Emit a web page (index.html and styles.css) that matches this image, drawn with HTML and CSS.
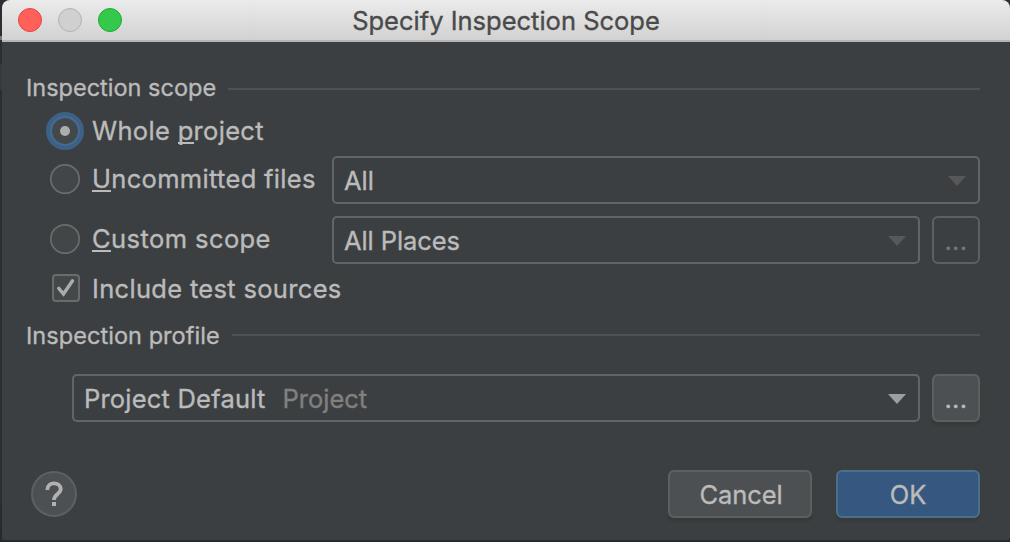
FILE: index.html
```html
<!DOCTYPE html>
<html lang="en">
<head>
<meta charset="utf-8">
<title>Specify Inspection Scope</title>
<link rel="stylesheet" href="styles.css">
</head>
<body>
<main class="dialog">
  <header class="titlebar">
    <div class="lights"><i class="light close"></i><i class="light minimize"></i><i class="light maximize"></i></div>
    <h1 class="title">Specify Inspection Scope</h1>
  </header>
  <div class="content">
    <div class="section"><h2>Inspection scope</h2><span class="rule"></span></div>
    <div class="row row-whole">
      <svg class="radio" viewBox="0 0 38 38"><circle cx="19" cy="19" r="16" fill="#43494a" stroke="#3d6185" stroke-width="6"/><circle cx="19" cy="19" r="14" fill="none" stroke="#436b94" stroke-width="2"/><circle cx="19" cy="19" r="5" fill="#adadad"/></svg>
      <span class="label">Whole <u>p</u>roject</span>
    </div>
    <div class="row row-field">
      <svg class="radio" viewBox="0 0 38 38"><circle cx="19" cy="19" r="14.2" fill="#414749" stroke="#6b6b6b" stroke-width="1.7"/></svg>
      <span class="label"><u>U</u>ncommitted files</span>
      <div class="combo"><span>All</span><svg class="arrow" viewBox="0 0 18 10"><path d="M0 0H18L9 10Z"/></svg></div>
    </div>
    <div class="row row-field row-custom">
      <svg class="radio" viewBox="0 0 38 38"><circle cx="19" cy="19" r="14.2" fill="#414749" stroke="#6b6b6b" stroke-width="1.7"/></svg>
      <span class="label"><u>C</u>ustom scope</span>
      <div class="combo"><span class="places">All Places</span><svg class="arrow" viewBox="0 0 18 10"><path d="M0 0H18L9 10Z"/></svg></div>
      <button class="more disabled">...</button>
    </div>
    <div class="row row-check">
      <svg class="check" viewBox="0 0 28 28"><rect x="1" y="1" width="26" height="26" rx="3" fill="#43494a" stroke="#6b6b6b" stroke-width="2"/><path d="M6.8 14.3L11.5 20L20.5 6.8" fill="none" stroke="#acacac" stroke-width="3.4" stroke-linecap="round"/></svg>
      <span class="label">Include test sources</span>
    </div>
    <div class="section section-profile"><h2>Inspection profile</h2><span class="rule"></span></div>
    <div class="row row-profile">
      <div class="combo active"><span class="profile">Project Default</span><span class="kind">Project</span><svg class="arrow" viewBox="0 0 18 10"><path d="M0 0H18L9 10Z"/></svg></div>
      <button class="more">...</button>
    </div>
    <footer class="footer">
      <svg class="help" viewBox="0 0 46 46"><circle cx="23" cy="23" r="22" fill="#4c5052" stroke="#5e6060" stroke-width="2"/><path d="M16.3 19C16.3 10 29.7 10.5 29.7 18C29.7 23 23 23 23 29" fill="none" stroke="#afb1b3" stroke-width="3.8"/><path d="M21 31h4v4h-4z" fill="#afb1b3"/></svg>
      <button class="btn cancel">Cancel</button>
      <button class="btn primary">OK</button>
    </footer>
  </div>
</main>
</body>
</html>
```
FILE: styles.css
```css
* { box-sizing: border-box; }
body {
  margin: 0;
  height: 542px;
  padding-left: 2px;
  overflow: hidden;
  background: linear-gradient(#2c2e33 0 36px, #77797b 36px 40px, #2b2d30 40px 64px, #343a40 64px 90px, #2b2d2f 90px 500px, #222a35 542px);
  font-family: Inter, "Liberation Sans", sans-serif;
  font-size: 25.5px;
  color: #bbbbbb;
  -webkit-text-stroke: 0.35px currentColor;
}
.dialog {
  width: 1008px;
  height: 540px;
  overflow: hidden;
  border-radius: 8px 8px 2px 2px;
  background: #3c3f41;
}
.titlebar {
  display: grid;
  grid-template-columns: 122px 1fr 122px;
  align-items: center;
  height: 42px;
  border-bottom: 2px solid #b5b5b5;
  background: linear-gradient(#ebebeb, #d2d2d2);
}
.lights { display: flex; gap: 16px; padding-left: 16px; }
.light { width: 24px; height: 24px; border-radius: 50%; border: 1px solid; }
.close { background: #ff605a; border-color: #e44642; }
.minimize { background: #d0d0d0; border-color: #b2b2b2; }
.maximize { background: #34c94a; border-color: #20a936; }
.title {
  margin: 0;
  padding-top: 2px;
  font-size: 25.5px;
  font-weight: 400;
  line-height: 38px;
  text-align: center;
  color: #4a4a4a;
}
.content { padding: 32px 30px 0 24px; }
.section { display: flex; align-items: center; gap: 12px; height: 28px; }
.section h2 { margin: 0; font-size: 23.5px; font-weight: 400; line-height: 28px; white-space: nowrap; }
.rule { flex: 1; height: 2px; margin-top: 2px; background: #515151; }
.row { display: flex; align-items: center; white-space: nowrap; }
.row-whole { height: 38px; margin-top: 10px; padding-left: 20px; }
.radio { flex: none; width: 38px; height: 38px; }
.label { margin-left: 8px; line-height: 32px; letter-spacing: 0.32px; }
.label u {
  text-decoration: none;
  background: linear-gradient(#bbb, #bbb) 0 calc(100% - 2px) / 100% 2px no-repeat;
}
.row-field { height: 48px; padding-left: 20px; margin-top: 6px; }
.row-field .radio { margin-top: -2px; }
.row-field .label { width: 240px; margin-top: -2px; }
.row-custom { margin-top: 12px; }
.row-custom .label { letter-spacing: 0.42px; }
.combo {
  display: flex;
  align-items: center;
  flex: 1;
  height: 48px;
  padding: 0 12px 0 10px;
  border: 2px solid #646464;
  border-radius: 5px;
}
.places { letter-spacing: -0.1px; }
.profile { letter-spacing: 0.2px; }
.arrow { width: 18px; height: 10px; margin-left: auto; margin-top: 2px; fill: #585858; }
.active .arrow { fill: #9c9ea0; }
.kind { margin-left: 17px; color: #808080; }
.more, .btn {
  height: 48px;
  padding: 0;
  border: 2px solid #5e6060;
  border-radius: 6px;
  background: #4c5052;
  box-shadow: 0 4px 1px #373a3b;
  color: #bbb;
  font: inherit;
  letter-spacing: -0.1px;
}
.more { width: 48px; margin-left: 12px; letter-spacing: 0.4px; }
.more.disabled { background: transparent; color: #777; box-shadow: none; }
.row-check { height: 28px; margin-top: 10px; padding-left: 26px; }
.check { width: 28px; height: 28px; flex: none; }
.row-check .label { margin-left: 12px; padding-top: 2px; }
.section-profile { margin-top: 20px; }
.section-profile h2 { letter-spacing: 0.05px; }
.section-profile .rule { margin-top: -2px; }
.row-profile { margin-top: 24px; padding-left: 46px; }
.footer { display: flex; align-items: center; margin-top: 48px; padding-left: 5px; gap: 24px; }
.help { width: 46px; height: 46px; margin-right: auto; }
.btn { width: 144px; }
.cancel { padding-left: 2px; }
.primary { background: #365880; border-color: #4c708c; }
```
